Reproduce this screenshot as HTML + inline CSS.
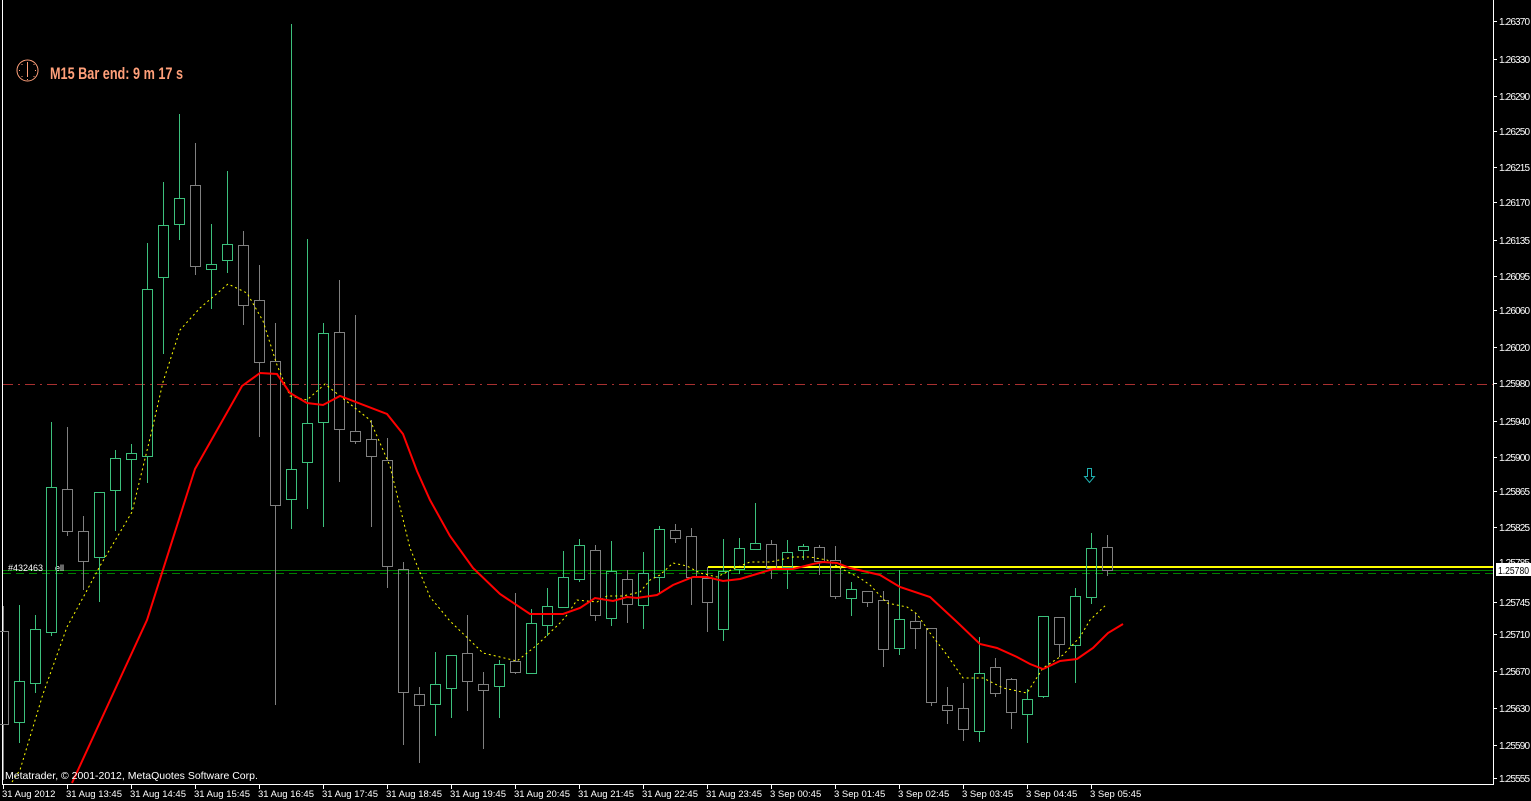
<!DOCTYPE html>
<html><head><meta charset="utf-8"><style>
html,body{margin:0;padding:0;background:#000;width:1531px;height:801px;overflow:hidden}
svg{display:block}
text{font-family:"Liberation Sans",sans-serif}
</style></head><body>
<svg width="1531" height="801" viewBox="0 0 1531 801" xmlns="http://www.w3.org/2000/svg">
<rect width="1531" height="801" fill="#000"/>
<path d="M2.5,0V784.5H1493.5V0" fill="none" stroke="#fff" stroke-width="1"/>
<line x1="3" y1="384.5" x2="1493" y2="384.5" stroke="#a83030" stroke-width="1" stroke-dasharray="10,5,2,5"/>
<line x1="3" y1="570.5" x2="1493" y2="570.5" stroke="#008000" stroke-width="1"/>
<line x1="3" y1="573.5" x2="1493" y2="573.5" stroke="#008000" stroke-width="1" stroke-dasharray="8,5"/>
<line x1="708" y1="567" x2="1493" y2="567" stroke="#ffff00" stroke-width="2"/>
<text x="8" y="571" font-size="9" fill="#fff">#432463</text>
<text x="55" y="571" font-size="9" fill="#fff">ell</text>
<g fill="none" stroke="#808080" stroke-width="1">
<path d="M3.5,606V631M3.5,724V780M67.5,427V489M67.5,531V536M83.5,516V531M83.5,561V590M195.5,143V185M195.5,266V275M243.5,231V245M243.5,305V325M259.5,265V300M259.5,362V437M275.5,323V361M275.5,505V705M339.5,280V332M339.5,429V482M355.5,315V431M355.5,441V444M371.5,420V439M371.5,456V527M387.5,438V460M387.5,566V588M403.5,562V569M403.5,692V745M419.5,687V694M419.5,705V763M467.5,615V653M467.5,681V711M483.5,672V684M483.5,690V749M515.5,593V661M515.5,672V674M595.5,545V550M595.5,615V621M627.5,570V579M627.5,604V623M675.5,524V530M675.5,538V543M691.5,528V536M691.5,577V605M707.5,567V578M707.5,602V632M771.5,540V544M771.5,568V579M819.5,545V547M819.5,561V575M835.5,546V560M835.5,596V599M867.5,602V607M883.5,591V600M883.5,649V667M915.5,613V621M915.5,628V649M931.5,702V706M947.5,687V705M947.5,710V724M963.5,683V708M963.5,729V741M995.5,658V667M995.5,693V697M1011.5,678V679M1011.5,712V729M1059.5,644V657M1107.5,535V547M1107.5,570V576"/>
<path d="M-1.5,631.5h10V724.5h-10zM62.5,489.5h10V531.5h-10zM78.5,531.5h10V561.5h-10zM190.5,185.5h10V266.5h-10zM238.5,245.5h10V305.5h-10zM254.5,300.5h10V362.5h-10zM270.5,361.5h10V505.5h-10zM334.5,332.5h10V429.5h-10zM350.5,431.5h10V441.5h-10zM366.5,439.5h10V456.5h-10zM382.5,460.5h10V566.5h-10zM398.5,569.5h10V692.5h-10zM414.5,694.5h10V705.5h-10zM462.5,653.5h10V681.5h-10zM478.5,684.5h10V690.5h-10zM510.5,661.5h10V672.5h-10zM590.5,550.5h10V615.5h-10zM622.5,579.5h10V604.5h-10zM670.5,530.5h10V538.5h-10zM686.5,536.5h10V577.5h-10zM702.5,578.5h10V602.5h-10zM766.5,544.5h10V568.5h-10zM814.5,547.5h10V561.5h-10zM830.5,560.5h10V596.5h-10zM862.5,591.5h10V602.5h-10zM878.5,600.5h10V649.5h-10zM910.5,621.5h10V628.5h-10zM926.5,628.5h10V702.5h-10zM942.5,705.5h10V710.5h-10zM958.5,708.5h10V729.5h-10zM990.5,667.5h10V693.5h-10zM1006.5,679.5h10V712.5h-10zM1054.5,617.5h10V644.5h-10zM1102.5,547.5h10V570.5h-10z"/>
</g>
<g fill="none" stroke="#3cc07c" stroke-width="1">
<path d="M19.5,605V681M19.5,722V743M35.5,615V629M35.5,683V693M51.5,422V487M51.5,632V636M99.5,557V602M115.5,450V458M115.5,490V531M131.5,444V453M131.5,459V510M147.5,243V289M147.5,456V483M163.5,182V225M163.5,277V354M179.5,114V198M179.5,224V240M211.5,224V264M211.5,269V309M227.5,171V244M227.5,260V273M291.5,24V469M291.5,499V529M307.5,239V423M307.5,462V509M323.5,323V333M323.5,422V527M435.5,652V684M435.5,704V736M451.5,688V718M499.5,660V664M499.5,686V718M531.5,609V623M547.5,588V606M547.5,625V636M563.5,551V577M579.5,539V545M579.5,579V582M611.5,541V571M611.5,618V626M643.5,552V573M643.5,605V629M659.5,526V529M659.5,577V593M723.5,539V571M723.5,629V641M739.5,538V548M739.5,569V574M755.5,503V543M787.5,540V552M787.5,567V589M803.5,544V546M803.5,550V560M851.5,582V589M851.5,598V616M899.5,570V619M899.5,648V655M979.5,637V673M979.5,731V742M1027.5,689V699M1027.5,714V743M1043.5,696V698M1075.5,588V596M1075.5,645V683M1091.5,533V548M1091.5,597V604"/>
<path d="M14.5,681.5h10V722.5h-10zM30.5,629.5h10V683.5h-10zM46.5,487.5h10V632.5h-10zM94.5,492.5h10V557.5h-10zM110.5,458.5h10V490.5h-10zM126.5,453.5h10V459.5h-10zM142.5,289.5h10V456.5h-10zM158.5,225.5h10V277.5h-10zM174.5,198.5h10V224.5h-10zM206.5,264.5h10V269.5h-10zM222.5,244.5h10V260.5h-10zM286.5,469.5h10V499.5h-10zM302.5,423.5h10V462.5h-10zM318.5,333.5h10V422.5h-10zM430.5,684.5h10V704.5h-10zM446.5,655.5h10V688.5h-10zM494.5,664.5h10V686.5h-10zM526.5,623.5h10V673.5h-10zM542.5,606.5h10V625.5h-10zM558.5,577.5h10V607.5h-10zM574.5,545.5h10V579.5h-10zM606.5,571.5h10V618.5h-10zM638.5,573.5h10V605.5h-10zM654.5,529.5h10V577.5h-10zM718.5,571.5h10V629.5h-10zM734.5,548.5h10V569.5h-10zM750.5,543.5h10V549.5h-10zM782.5,552.5h10V567.5h-10zM798.5,546.5h10V550.5h-10zM846.5,589.5h10V598.5h-10zM894.5,619.5h10V648.5h-10zM974.5,673.5h10V731.5h-10zM1022.5,699.5h10V714.5h-10zM1038.5,616.5h10V696.5h-10zM1070.5,596.5h10V645.5h-10zM1086.5,548.5h10V597.5h-10z"/>
</g>
<polyline fill="none" stroke="#ffff00" stroke-width="1" stroke-dasharray="2,3" points="12,782 20,770 43,694 67,627 85,594 100,566 132,512 152,430 163,382 180,330 200,308 228,284 247,293 263,321 277,365 290,396 307,400 325,384 340,396 370,420 390,466 410,548 430,597 450,621 483,653 517,661 537,645 560,623 567,615 577,600 587,601 597,602 607,596 623,596 640,592 650,580 660,575 673,563 687,566 700,573 717,577 733,569 750,562 770,562 793,557 810,557 827,560 840,568 860,578 870,585 887,603 907,607 917,614 930,633 947,655 963,678 983,678 1003,688 1027,693 1043,668 1063,655 1080,637 1090,620 1107,604"/>
<polyline fill="none" stroke="#ff0000" stroke-width="2" points="72,783 147,620 195,469 242,386 260,373 277,374 290,393 307,403 323,405 340,396 387,414 403,434 417,471 430,500 450,536 473,568 500,594 530,614 563,614 580,608 595,598 613,601 627,597 637,598 657,595 673,585 693,577 707,577 723,581 740,579 760,573 773,569 793,569 813,564 823,562 837,563 850,568 880,575 900,587 930,597 957,622 980,644 997,648 1017,657 1030,664 1043,669 1060,661 1077,659 1093,648 1108,633 1123,624"/>
<path d="M1087.5,468.5h4v8h3l-5,6l-5,-6h3z" fill="none" stroke="#20b0b0" stroke-width="1"/>
<circle cx="27.5" cy="70.5" r="10.5" fill="none" stroke="#ffa07a" stroke-width="1"/>
<line x1="27.5" y1="62" x2="27.5" y2="77" stroke="#ffa07a"/>
<path d="M19,70.5h1M35,70.5h1M27.5,79v1M21.5,64.5h1M33.5,64.5h1M21.5,76.5h1M33.5,76.5h1" stroke="#ffa07a"/>
<text x="50" y="79" font-size="17" font-weight="bold" fill="#ffa07a" textLength="133" lengthAdjust="spacingAndGlyphs">M15 Bar end: 9 m 17 s</text>
<text x="5" y="779" font-size="10.5" fill="#fff">Metatrader, © 2001-2012, MetaQuotes Software Corp.</text>
<g font-size="10" fill="#fff" stroke="none" lengthAdjust="spacingAndGlyphs">
<text x="1499" y="25" textLength="31">1.26370</text><text x="1499" y="63" textLength="31">1.26330</text><text x="1499" y="100" textLength="31">1.26290</text><text x="1499" y="135" textLength="31">1.26250</text><text x="1499" y="171" textLength="31">1.26215</text><text x="1499" y="206" textLength="31">1.26170</text><text x="1499" y="244" textLength="31">1.26135</text><text x="1499" y="280" textLength="31">1.26095</text><text x="1499" y="314" textLength="31">1.26060</text><text x="1499" y="351" textLength="31">1.26020</text><text x="1499" y="387" textLength="31">1.25980</text><text x="1499" y="425" textLength="31">1.25940</text><text x="1499" y="461" textLength="31">1.25900</text><text x="1499" y="495" textLength="31">1.25865</text><text x="1499" y="531" textLength="31">1.25825</text><text x="1499" y="566" textLength="31">1.25785</text><text x="1499" y="606" textLength="31">1.25745</text><text x="1499" y="638" textLength="31">1.25710</text><text x="1499" y="675" textLength="31">1.25670</text><text x="1499" y="712" textLength="31">1.25630</text><text x="1499" y="749" textLength="31">1.25590</text><text x="1499" y="782" textLength="31">1.25555</text>
</g>
<path d="M1494,21.5h3M1494,59.5h3M1494,96.5h3M1494,131.5h3M1494,167.5h3M1494,202.5h3M1494,240.5h3M1494,276.5h3M1494,310.5h3M1494,347.5h3M1494,383.5h3M1494,421.5h3M1494,457.5h3M1494,491.5h3M1494,527.5h3M1494,602.5h3M1494,634.5h3M1494,671.5h3M1494,708.5h3M1494,745.5h3M1494,778.5h3" stroke="#fff"/>
<rect x="1496" y="563" width="35" height="13" fill="#fff"/>
<text x="1498" y="574" font-size="10" fill="#000" textLength="31" lengthAdjust="spacingAndGlyphs">1.25780</text>
<path d="M3.5,785v4M67.5,785v4M131.5,785v4M195.5,785v4M259.5,785v4M323.5,785v4M387.5,785v4M451.5,785v4M515.5,785v4M579.5,785v4M643.5,785v4M707.5,785v4M771.5,785v4M835.5,785v4M899.5,785v4M963.5,785v4M1027.5,785v4M1091.5,785v4" stroke="#fff"/>
<g font-size="9.5" fill="#fff">
<text x="2" y="797">31 Aug 2012</text><text x="66" y="797">31 Aug 13:45</text><text x="130" y="797">31 Aug 14:45</text><text x="194" y="797">31 Aug 15:45</text><text x="258" y="797">31 Aug 16:45</text><text x="322" y="797">31 Aug 17:45</text><text x="386" y="797">31 Aug 18:45</text><text x="450" y="797">31 Aug 19:45</text><text x="514" y="797">31 Aug 20:45</text><text x="578" y="797">31 Aug 21:45</text><text x="642" y="797">31 Aug 22:45</text><text x="706" y="797">31 Aug 23:45</text><text x="770" y="797">3 Sep 00:45</text><text x="834" y="797">3 Sep 01:45</text><text x="898" y="797">3 Sep 02:45</text><text x="962" y="797">3 Sep 03:45</text><text x="1026" y="797">3 Sep 04:45</text><text x="1090" y="797">3 Sep 05:45</text>
</g>
</svg>
</body></html>
